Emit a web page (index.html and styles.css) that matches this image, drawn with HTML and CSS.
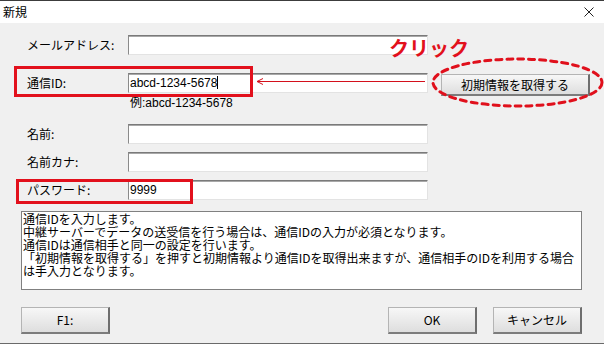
FILE: index.html
```html
<!DOCTYPE html>
<html lang="ja">
<head>
    <meta charset="UTF-8">
    <meta name="viewport" content="width=device-width, initial-scale=1.0">
    <title>新規</title>
    <link rel="stylesheet" href="styles.css">
</head>
<body>
    <div class="window">
        <div class="titlebar">
            <span class="title">新規</span>
            <svg class="close" width="10" height="10" viewBox="0 0 10 10">
                <path d="M0.5 0.5 L9.5 9.5 M9.5 0.5 L0.5 9.5" stroke="#222" stroke-width="1" fill="none"/>
            </svg>
        </div>

        <div class="content">
            <div class="row row-mail">
                <label>メールアドレス:</label>
                <div class="field"></div>
            </div>

            <div class="row row-id">
                <label>通信ID:</label>
                <div class="field">abcd-1234-5678<span class="caret"></span></div>
                <button class="btn btn-fetch">初期情報を取得する</button>
            </div>

            <div class="hint">例:abcd-1234-5678</div>

            <div class="row row-name">
                <label>名前:</label>
                <div class="field"></div>
            </div>

            <div class="row row-kana">
                <label>名前カナ:</label>
                <div class="field"></div>
            </div>

            <div class="row row-pass">
                <label>パスワード:</label>
                <div class="field">9999</div>
            </div>

            <div class="memo">
                <p>通信IDを入力します。</p>
                <p>中継サーバーでデータの送受信を行う場合は、通信IDの入力が必須となります。</p>
                <p>通信IDは通信相手と同一の設定を行います。</p>
                <p>「初期情報を取得する」を押すと初期情報より通信IDを取得出来ますが、通信相手のIDを利用する場合</p>
                <p>は手入力となります。</p>
            </div>

            <div class="footer">
                <button class="btn">F1:</button>
                <div class="footer-right">
                    <button class="btn">OK</button>
                    <button class="btn">キャンセル</button>
                </div>
            </div>
        </div>

        <!-- 説明用の赤い注記 -->
        <div class="mark mark-id"></div>
        <div class="mark mark-pass"></div>
        <svg class="arrow" width="172" height="9" viewBox="0 0 172 9">
            <path d="M2 4.5 H170" stroke="#d4101c" stroke-width="1" fill="none"/>
            <path d="M8 1.5 L2 4.5 L8 7.5" stroke="#d4101c" stroke-width="1" fill="none"/>
        </svg>
        <svg class="ring" width="174" height="54" viewBox="0 0 174 54">
            <ellipse cx="87.5" cy="26.5" rx="84.5" ry="23.5" fill="none" stroke="#e0101c" stroke-width="3" stroke-dasharray="6 5" stroke-linecap="round"/>
        </svg>
        <div class="click">クリック</div>
    </div>
</body>
</html>
```

FILE: styles.css
```css
* {
    box-sizing: border-box;
}

body {
    margin: 0;
    font-family: "Noto Sans CJK JP", "Liberation Sans", sans-serif;
    font-size: 12px;
    color: #000;
    background: #f0f0f0;
}

.window {
    position: relative;
    width: 604px;
    height: 344px;
    display: flex;
    flex-direction: column;
    border-top: 1px solid #3c3c3c;
    border-bottom: 1px solid #6a6a6a;
    overflow: hidden;
}

.titlebar {
    height: 22px;
    background: #fff;
    display: flex;
    align-items: center;
    justify-content: space-between;
    padding: 0 10px 0 3px;
}

.title {
    line-height: 12px;
}

.content {
    flex: 1;
    background: #f0f0f0;
    display: flex;
    flex-direction: column;
}

.row {
    display: grid;
    grid-template-columns: 128px 300px auto;
    align-items: center;
    height: 20px;
}

.row label {
    padding-left: 27px;
    line-height: 12px;
}

.field {
    height: 20px;
    background: #fff;
    border: 1px solid;
    border-color: #7a7a7a #e3e3e3 #e3e3e3 #8a8a8a;
    box-shadow: inset 0 1px 0 #a8a8a8;
    padding: 2px 1px 0;
    line-height: 15px;
    font-family: "Liberation Sans", "Noto Sans CJK JP", sans-serif;
}

.caret {
    display: inline-block;
    width: 1px;
    height: 13px;
    background: #000;
    vertical-align: -2px;
}

.row-mail { margin-top: 12px; }
.row-id { margin-top: 15px; }
.row-name { margin-top: 14px; }
.row-kana { margin-top: 8px; }
.row-pass { margin-top: 8px; }

.hint {
    margin-top: 6px;
    padding-left: 130px;
    height: 14px;
    line-height: 14px;
    font-family: "Liberation Sans", "Noto Sans CJK JP", sans-serif;
}

.btn {
    font-family: "Noto Sans CJK JP", "Liberation Sans", sans-serif;
    font-size: 12px;
    color: #000;
    background: linear-gradient(#f7f7f7, #dedede);
    border: 1px solid #b4b4b4;
    border-right: 2px solid #6e6e6e;
    border-bottom: 2px solid #7c7c7c;
    padding: 0;
    line-height: 12px;
}

.btn-fetch {
    width: 149px;
    height: 22px;
    margin: 4px 0 0 13px;
}

.memo {
    margin: 11px 0 0 21px;
    width: 561px;
    height: 79px;
    background: #fff;
    border: 1px solid #808080;
    padding: 0 1px;
}

.memo p {
    margin: 0;
    line-height: 13px;
}

.footer {
    margin-top: 17px;
    padding: 0 22px 0 21px;
    display: flex;
    justify-content: space-between;
}

.footer-right {
    display: flex;
    gap: 16px;
}

.footer .btn {
    width: 89px;
    height: 27px;
}

/* 注記 */
.mark {
    position: absolute;
    border: 3px solid #e2101c;
}

.mark-id {
    left: 14px;
    top: 65px;
    width: 239px;
    height: 31px;
}

.mark-pass {
    left: 16px;
    top: 178px;
    width: 177px;
    height: 25px;
}

.arrow {
    position: absolute;
    left: 255px;
    top: 76px;
}

.ring {
    position: absolute;
    left: 430px;
    top: 55px;
}

.click {
    position: absolute;
    left: 389px;
    top: 34px;
    color: #e2101c;
    font-size: 20px;
    font-weight: bold;
    line-height: 26px;
}
```
